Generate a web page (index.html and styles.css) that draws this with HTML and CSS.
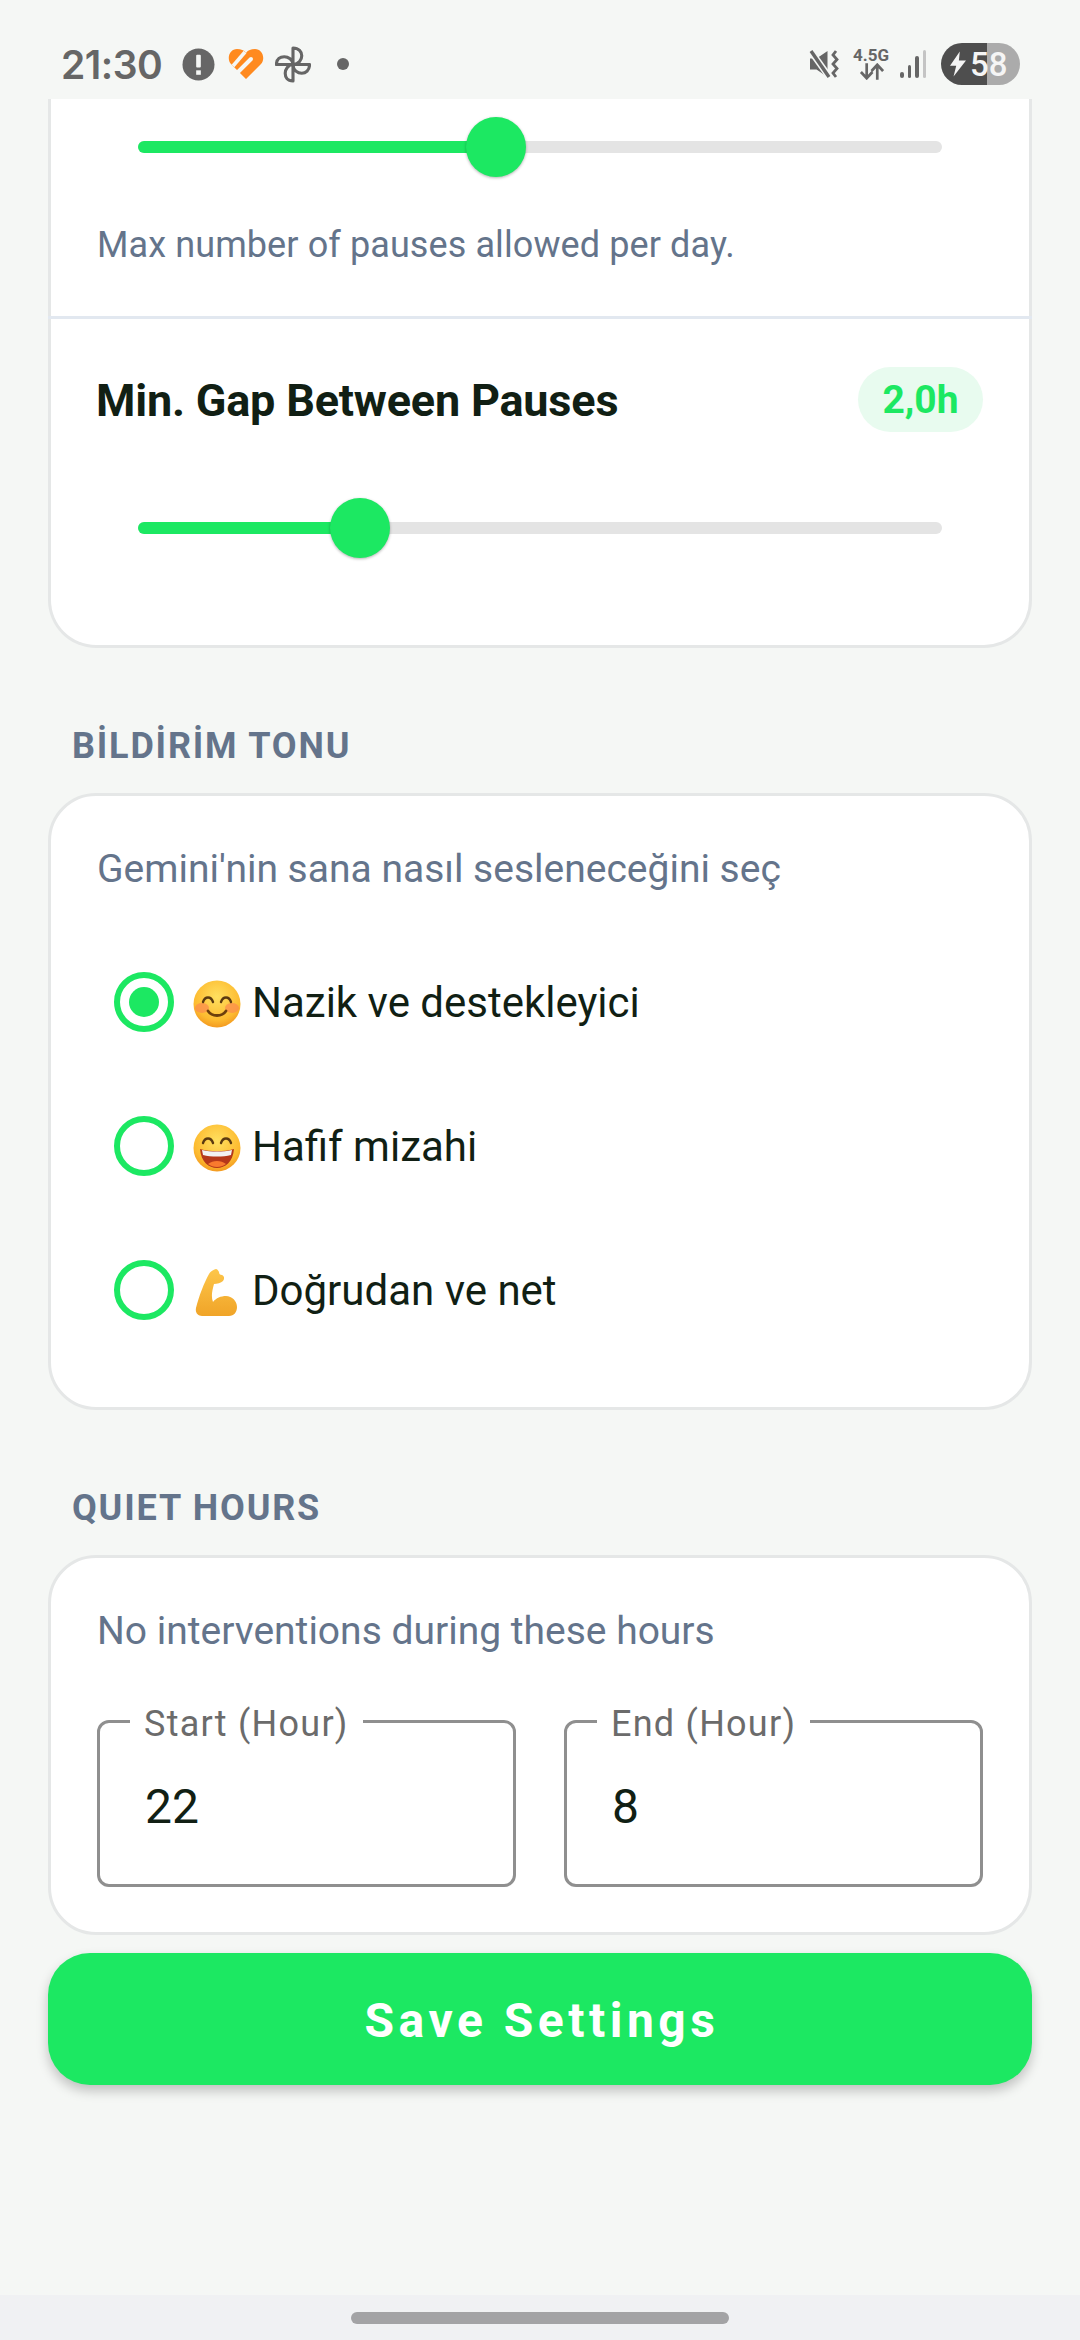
FILE: index.html
```html
<!DOCTYPE html>
<html lang="en">
<head>
    <meta charset="UTF-8">
    <meta name="viewport" content="width=device-width, initial-scale=1.0">
    <title>Settings</title>
    <link rel="stylesheet" href="styles.css">
</head>
<body>
    <div class="status-bar">
        <div class="status-left">
            <span class="clock">21:30</span>
            <svg class="icon-alert" viewBox="0 0 34 34"><circle cx="17" cy="17" r="16.5" fill="#666"/><rect x="14.6" y="7" width="4.8" height="13" rx="1" fill="#f5f7f5"/><rect x="14.6" y="23" width="4.8" height="4.6" fill="#f5f7f5"/></svg>
            <svg class="icon-heart" viewBox="0 0 36 30">
                <path d="M18 30L3 15C-2 9 2 0 9 0c4 0 7 1 9 4 2-3 5-4 9-4 7 0 11 9 6 15z" fill="#ff8a1f"/>
                <path d="M17 3L5 17" stroke="#f5f7f5" stroke-width="3.6" fill="none"/>
                <path d="M8 25L23 10" stroke="#f5f7f5" stroke-width="4" stroke-linecap="round" fill="none"/>
            </svg>
            <svg class="icon-fan" viewBox="0 0 36 38" fill="none" stroke="#666" stroke-width="3.2" stroke-linejoin="round"><path d="M18 19V2c6 0 9 4 9 8s-3 9-9 9zM18 19h17c0 6-4 9-8 9s-9-3-9-9zM18 19v17c-6 0-8-4-8-8s3-9 8-9zM18 19H1c0-6 4-8 8-8s9 3 9 8z"/></svg>
            <span class="dot"></span>
        </div>
        <div class="status-right">
            <svg class="icon-mute" viewBox="0 0 30 28">
                <path d="M1 8.500h6.500L18.500 1v26L7.500 19.500H1z" fill="#666"/>
                <path d="M1 0l20 28" stroke="#f5f7f5" stroke-width="6.500"/>
                <path d="M2 1l18 26" stroke="#666" stroke-width="3.400"/>
                <path d="M27 1l-3 4 4 4.500-4 4.500 4 4.500-4 4.500 3 4" fill="none" stroke="#666" stroke-width="2.800"/>
            </svg>
            <div class="net">
                <span class="net-label">4.5G</span>
                <svg class="icon-arrows" viewBox="0 0 26 17" fill="none" stroke="#666" stroke-width="2.800"><path d="M8 0v15M2 9l6 6.500 6-6.500M19 17V2M13 8l6-6.500 6 6.500"/></svg>
            </div>
            <div class="signal">
                <span class="bar bar-1"></span>
                <span class="bar bar-2"></span>
                <span class="bar bar-3"></span>
                <span class="bar bar-4"></span>
            </div>
            <div class="battery">
                <svg class="icon-bolt" viewBox="0 0 18 28"><path d="M11 0L0 16h7L4 28 18 10h-8z" fill="#f5f5f5"/></svg>
                <span class="battery-num">58</span>
            </div>
        </div>
    </div>

    <main class="content">
        <section class="card card-top">
            <div class="setting setting-first">
                <div class="slider">
                    <div class="track">
                        <div class="fill" style="width: 358px"></div>
                        <div class="thumb" style="left: 358px"></div>
                    </div>
                </div>
                <p class="hint">Max number of pauses allowed per day.</p>
            </div>
            <div class="setting setting-gap">
                <div class="setting-head">
                    <h3>Min. Gap Between Pauses</h3>
                    <span class="pill">2,0h</span>
                </div>
                <div class="slider">
                    <div class="track">
                        <div class="fill" style="width: 222px"></div>
                        <div class="thumb" style="left: 222px"></div>
                    </div>
                </div>
            </div>
        </section>

        <h2 class="section-label">BİLDİRİM TONU</h2>
        <section class="card card-tone">
            <p class="card-text">Gemini'nin sana nasıl sesleneceğini seç</p>
            <div class="radio-row">
                <span class="radio radio-on"></span>
                <svg class="emoji" viewBox="0 0 48 48">
                    <defs>
                        <radialGradient id="face" cx="50%" cy="35%" r="70%"><stop offset="0" stop-color="#ffe060"/><stop offset=".7" stop-color="#fdbb30"/><stop offset="1" stop-color="#f0901c"/></radialGradient>
                    </defs>
                    <circle cx="24" cy="24" r="23.500" fill="url(#face)"/>
                    <ellipse cx="9" cy="28" rx="7" ry="5" fill="#fb8a4e" opacity=".7"/>
                    <ellipse cx="39" cy="28" rx="7" ry="5" fill="#fb8a4e" opacity=".7"/>
                    <path d="M10 22c2-6 8-6 10 0M28 22c2-6 8-6 10 0" fill="none" stroke="#5b3a10" stroke-width="2.400" stroke-linecap="round"/>
                    <path d="M15 31c4 6 14 6 18 0" fill="none" stroke="#6d3f0c" stroke-width="2.800" stroke-linecap="round"/>
                </svg>
                <span class="radio-text">Nazik ve destekleyici</span>
            </div>
            <div class="radio-row">
                <span class="radio"></span>
                <svg class="emoji" viewBox="0 0 48 48">
                    <circle cx="24" cy="24" r="23.500" fill="url(#face)"/>
                    <path d="M10 19c2-6 8-6 10 0M28 19c2-6 8-6 10 0" fill="none" stroke="#5b3a10" stroke-width="2.400" stroke-linecap="round"/>
                    <path d="M7 25c10 3 24 3 34 0-1 13-9 19-17 19S8 38 7 25z" fill="#b5381a"/>
                    <path d="M9 26c9 2 21 2 30 0l-1 5c-8 2-20 2-28 0z" fill="#f2f2f2"/>
                    <path d="M15 40c5-4 13-4 18 0-5 4-13 4-18 0z" fill="#f97a2e"/>
                </svg>
                <span class="radio-text">Hafif mizahi</span>
            </div>
            <div class="radio-row">
                <span class="radio"></span>
                <svg class="emoji" viewBox="-3 -1 48 48">
                    <defs>
                        <linearGradient id="arm" x1="0" y1="0" x2="0" y2="1"><stop offset="0" stop-color="#fdc64a"/><stop offset="1" stop-color="#f0a428"/></linearGradient>
                    </defs>
                    <path d="M20 0c-3 1-5 2-7 5C8 14 3 27 0 39c-1 5 2 8 6 8h27c5 0 8-4 8-9 0-6-5-11-11-11-5 0-10 2-13 6-2-5-1-11 1-18 3 0 7-1 9-3 2-3 1-5-1-6-2 0-3-1-3-3-1-2-2-3-3-3z" fill="url(#arm)"/>
                </svg>
                <span class="radio-text">Doğrudan ve net</span>
            </div>
        </section>

        <h2 class="section-label">QUIET HOURS</h2>
        <section class="card card-quiet">
            <p class="card-text">No interventions during these hours</p>
            <div class="hour-fields">
                <fieldset class="hour-field">
                    <legend>Start (Hour)</legend>
                    <span class="hour-value">22</span>
                </fieldset>
                <fieldset class="hour-field">
                    <legend>End (Hour)</legend>
                    <span class="hour-value">8</span>
                </fieldset>
            </div>
        </section>

        <button class="save-btn" type="button">Save Settings</button>
    </main>

    <div class="nav-bar"><span class="nav-handle"></span></div>
</body>
</html>
```

FILE: styles.css
```css
* {
    box-sizing: border-box;
}

body {
    margin: 0;
    width: 1080px;
    height: 2340px;
    display: flex;
    flex-direction: column;
    overflow: hidden;
    font-family: 'Roboto', sans-serif;
    background-color: #f5f7f5;
    color: #111f14;
}

/* status bar */
.status-bar {
    height: 99px;
    flex-shrink: 0;
    display: flex;
    justify-content: space-between;
    padding: 46px 60px 0 61px;
}

.status-left,
.status-right {
    display: flex;
    align-items: center;
    height: 36px;
}

.clock {
    font-family: 'Inter', sans-serif;
    font-size: 39px;
    font-weight: 600;
    color: #666;
    letter-spacing: -0.5px;
    width: 121px;
}

.icon-alert {
    width: 33px;
    height: 33px;
    margin-right: 13px;
}

.icon-heart {
    width: 36px;
    height: 30px;
    margin-right: 11px;
}

.icon-fan {
    width: 36px;
    height: 37px;
}

.dot {
    width: 12px;
    height: 12px;
    border-radius: 50%;
    background-color: #666;
    margin-left: 26px;
}

.icon-mute {
    width: 30px;
    height: 28px;
    margin-right: 14px;
}

.net {
    width: 36px;
    display: flex;
    flex-direction: column;
    align-items: center;
    margin-right: 11px;
}

.net-label {
    font-size: 17px;
    font-weight: 700;
    line-height: 15px;
    color: #666;
}

.icon-arrows {
    width: 25px;
    height: 17px;
}

.signal {
    display: flex;
    align-items: flex-end;
    gap: 4px;
    height: 28px;
    margin-right: 15px;
}

.bar {
    width: 3.500px;
    border-radius: 2px;
    background-color: #666;
}

.bar-1 { height: 6px; }
.bar-2 { height: 13px; }
.bar-3 { height: 22px; }
.bar-4 { height: 28px; background-color: #c4c4c4; }

.battery {
    width: 79px;
    height: 42px;
    border-radius: 21px;
    display: flex;
    align-items: center;
    padding-left: 9px;
    background: linear-gradient(90deg, #4e4e4e 0, #4e4e4e 46px, #ababab 46px);
}

.icon-bolt {
    width: 16px;
    height: 26px;
    margin-right: 4px;
}

.battery-num {
    font-size: 33px;
    font-weight: 500;
    color: #f5f5f5;
}

/* cards */
.content {
    flex: 1;
    padding: 0 48px;
    display: flex;
    flex-direction: column;
}

.card {
    background-color: #ffffff;
    border: 3px solid #e5e7e7;
    border-radius: 48px;
}

.card-top {
    border-top: none;
    border-radius: 0 0 48px 48px;
}

.setting {
    padding: 0 46px;
}

.setting-first {
    height: 220px;
    margin: 0 -3px;
    padding: 42px 49px 0;
    border-bottom: 3px solid #e2e8f0;
}

.setting-gap {
    padding-top: 48px;
    padding-bottom: 111px;
}

.setting-head {
    display: flex;
    justify-content: space-between;
    align-items: center;
    height: 65px;
}

h3 {
    margin: 2px 0 0 -1px;
    font-size: 45px;
    font-weight: 700;
    letter-spacing: -0.2px;
}

.pill {
    width: 125px;
    height: 65px;
    border-radius: 33px;
    background-color: #e8fbef;
    color: #1ce862;
    font-size: 39px;
    font-weight: 700;
    display: flex;
    justify-content: center;
    align-items: center;
}

.slider {
    padding: 0 41px;
}

.setting-gap .slider {
    margin-top: 90px;
}

.track {
    position: relative;
    height: 12px;
    border-radius: 6px;
    background-color: #e4e4e4;
}

.fill {
    height: 12px;
    border-radius: 6px 0 0 6px;
    background-color: #1ce862;
}

.thumb {
    position: absolute;
    top: -24px;
    width: 60px;
    height: 60px;
    margin-left: -30px;
    border-radius: 50%;
    background-color: #1ce862;
    box-shadow: 0 1px 3px rgba(0, 0, 0, 0.3);
}

.hint {
    margin: 70px 0 0;
    font-size: 36px;
    line-height: 44px;
    letter-spacing: 0.1px;
    color: #64748b;
}

.section-label {
    margin: 73px 0 24px;
    padding: 0 24px;
    height: 48px;
    line-height: 50px;
    font-size: 36px;
    font-weight: 700;
    letter-spacing: 1.800px;
    color: #64748b;
}

.card-tone {
    padding: 51px 46px 45px;
}

.card-text {
    margin: 0;
    font-size: 39px;
    line-height: 44px;
    color: #64748b;
}

.card-tone .card-text {
    margin-bottom: 39px;
}

.radio-row {
    display: flex;
    align-items: center;
    height: 144px;
    padding-left: 17px;
}

.radio {
    width: 60px;
    height: 60px;
    border: 6px solid #1ce862;
    border-radius: 50%;
    margin-right: 19px;
    display: flex;
    justify-content: center;
    align-items: center;
}

.radio-on::after {
    content: "";
    width: 30px;
    height: 30px;
    border-radius: 50%;
    background-color: #1ce862;
}

.emoji {
    width: 48px;
    height: 48px;
    margin-right: 11px;
    margin-top: 4px;
}

.radio-text {
    font-size: 42px;
    margin-top: 1px;
}

.card-quiet {
    padding: 51px 46px 45px;
}

.hour-fields {
    display: flex;
    gap: 48px;
    margin-top: 44px;
}

.hour-field {
    flex: 1;
    margin: 0;
    height: 190px;
    padding: 0 0 0 45px;
    border: 3px solid #8f8f8f;
    border-radius: 12px;
}

.hour-field legend {
    padding: 6px 14px 0;
    margin-left: -15px;
    font-size: 36px;
    line-height: 42px;
    color: #6b6b6b;
    letter-spacing: 1.250px;
}

.hour-value {
    display: block;
    margin-top: 34px;
    font-size: 48px;
    line-height: 56px;
}

.save-btn {
    margin-top: 18px;
    height: 132px;
    width: 100%;
    flex-shrink: 0;
    padding: 2px 0 0 4px;
    border: none;
    border-radius: 42px;
    background-color: #1ce862;
    color: #ffffff;
    font-family: 'Roboto', sans-serif;
    font-size: 48px;
    font-weight: 700;
    letter-spacing: 4.500px;
    box-shadow: 0 6px 12px rgba(0, 0, 0, 0.22);
}

.nav-bar {
    height: 45px;
    flex-shrink: 0;
    background-color: #f0f1f3;
    display: flex;
    justify-content: center;
    padding-top: 17px;
}

.nav-handle {
    width: 378px;
    height: 12px;
    border-radius: 6px;
    background-color: #a3a3a5;
}
```
